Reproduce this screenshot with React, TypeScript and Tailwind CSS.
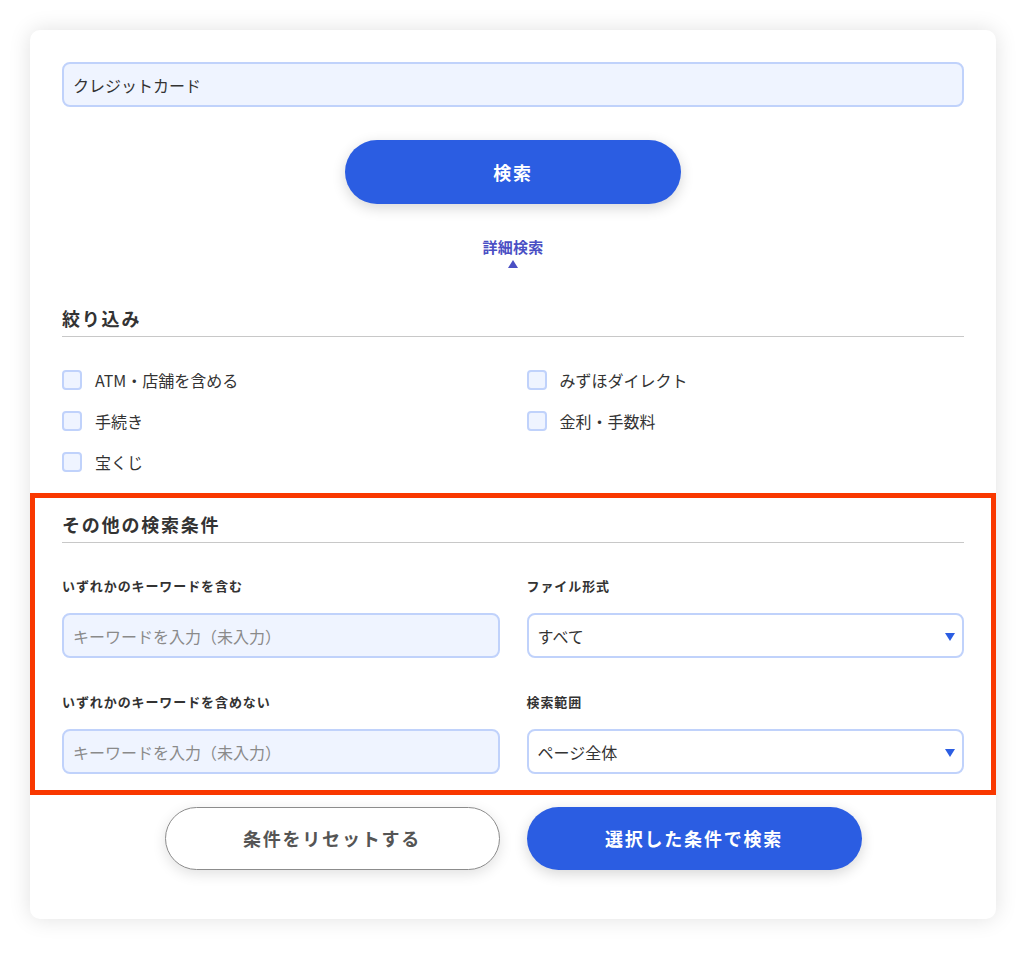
import { useState } from "react";

const FONT = { fontFamily: '"Noto Sans CJK JP", "Noto Sans", sans-serif' };

const FILTERS = [
  ["ATM・店舗を含める", "みずほダイレクト"],
  ["手続き", "金利・手数料"],
  ["宝くじ", null],
];

function Check({ label }: { label: string }) {
  const [on, setOn] = useState(false);
  return (
    <label className="flex h-5 cursor-pointer items-center gap-[13px]">
      <input
        type="checkbox"
        checked={on}
        onChange={() => setOn(!on)}
        className="h-5 w-5 appearance-none rounded-[4px] border-2 border-[#c0d2fb] bg-[#eff4ff]"
      />
      <span className="text-[16px] leading-5 text-[#333]">{label}</span>
    </label>
  );
}

function Caret() {
  return (
    <svg width="10" height="8" viewBox="0 0 10 8" className="pointer-events-none absolute right-[9px] top-[20px]">
      <path d="M0 0 H10 L5 8 Z" fill="#2b5de2" />
    </svg>
  );
}

function Select({ value }: { value: string }) {
  return (
    <div className="relative">
      <div className="flex h-[45px] items-center rounded-[8px] border-2 border-[#c0d2fb] bg-white px-[9px] text-[16px] text-[#333]">
        {value}
      </div>
      <Caret />
    </div>
  );
}

function KeywordInput() {
  return (
    <input
      placeholder="キーワードを入力（未入力）"
      className="h-[45px] w-full rounded-[8px] border-2 border-[#c0d2fb] bg-[#eff4ff] px-[9px] text-[16px] text-[#333] outline-none placeholder:text-[#8a8a8a]"
    />
  );
}

function Label({ children }: { children: string }) {
  return <p className="text-[13px] font-bold leading-5 tracking-[0.07em] text-[#333]">{children}</p>;
}

export default function App() {
  const [q, setQ] = useState("クレジットカード");

  return (
    <div className="min-h-screen bg-white p-[30px]" style={FONT}>
      <div className="rounded-[10px] bg-white px-8 pb-[49px] pt-8 shadow-[0_0_22px_rgba(0,0,0,0.12)]">
        {/* キーワード */}
        <input
          value={q}
          onChange={(e) => setQ(e.target.value)}
          className="block h-[45px] w-full rounded-[8px] border-2 border-[#c0d2fb] bg-[#eff4ff] px-[9px] text-[16px] text-[#333] outline-none"
        />

        <button className="mx-auto mt-[33px] flex h-16 w-[336px] items-center justify-center rounded-full bg-[#2b5de2] text-[18px] font-bold tracking-[0.1em] text-white shadow-[0_4px_14px_rgba(0,0,0,0.16)]">
          検索
        </button>

        {/* 詳細検索トグル */}
        <div className="mt-[33px] flex flex-col items-center">
          <span className="text-[15px] font-bold leading-5 tracking-[0.02em] text-[#4a4fc4]">詳細検索</span>
          <svg width="10" height="8" viewBox="0 0 10 8" className="mt-[3px]">
            <path d="M5 0 L10 8 H0 Z" fill="#4a4fc4" />
          </svg>
        </div>

        {/* 絞り込み */}
        <h2 className="mt-[37px] border-b border-[#c8c8c8] pb-[5px] text-[18px] font-bold leading-[26px] tracking-[0.1em] text-[#333]">
          絞り込み
        </h2>
        <div className="mt-[33px] grid grid-cols-2 gap-x-[27px] gap-y-[21px]">
          {FILTERS.flat().map((f, i) => (f ? <Check key={i} label={f} /> : <div key={i} />))}
        </div>

        {/* その他の検索条件 */}
        <div className="-mx-8 mt-[21px] border-[5px] border-[#f93800] px-[27px] pb-4 pt-[13px]">
          <h2 className="border-b border-[#c8c8c8] pb-[5px] text-[18px] font-bold leading-[26px] tracking-[0.1em] text-[#333]">
            その他の検索条件
          </h2>
          <div className="mt-[33px] grid grid-cols-2 gap-x-[27px]">
            <div>
              <Label>いずれかのキーワードを含む</Label>
              <div className="mt-[17px]">
                <KeywordInput />
              </div>
              <div className="mt-[34px]">
                <Label>いずれかのキーワードを含めない</Label>
              </div>
              <div className="mt-[17px]">
                <KeywordInput />
              </div>
            </div>
            <div>
              <Label>ファイル形式</Label>
              <div className="mt-[17px]">
                <Select value="すべて" />
              </div>
              <div className="mt-[34px]">
                <Label>検索範囲</Label>
              </div>
              <div className="mt-[17px]">
                <Select value="ページ全体" />
              </div>
            </div>
          </div>
        </div>

        {/* ボタン */}
        <div className="mt-3 flex justify-center gap-[27px]">
          <button className="flex h-[63px] w-[335px] items-center justify-center rounded-full border border-[#8c8c8c] bg-white text-[18px] font-bold tracking-[0.1em] text-[#555] shadow-[0_4px_14px_rgba(0,0,0,0.12)]">
            条件をリセットする
          </button>
          <button className="flex h-[63px] w-[335px] items-center justify-center rounded-full bg-[#2b5de2] text-[18px] font-bold tracking-[0.1em] text-white shadow-[0_4px_14px_rgba(0,0,0,0.16)]">
            選択した条件で検索
          </button>
        </div>
      </div>
    </div>
  );
}
